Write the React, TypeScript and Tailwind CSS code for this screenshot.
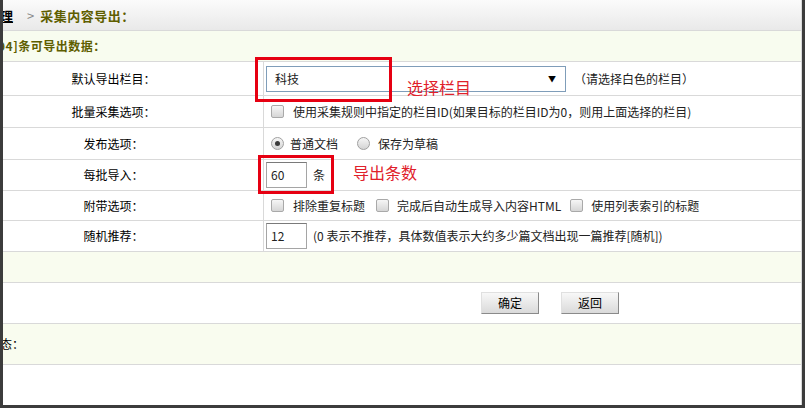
import React from 'react'

const font = { fontFamily: '"Noto Sans CJK SC", "Liberation Sans", sans-serif' }

function Checkbox() {
  return (
    <span className="inline-block w-[13px] h-[13px] rounded-[2px] border border-[#a9a9a9] bg-gradient-to-b from-[#f6f6f6] to-[#d6d6d6] shrink-0" />
  )
}

function Radio({ checked }: { checked?: boolean }) {
  return (
    <span className="inline-flex items-center justify-center w-[13px] h-[13px] rounded-full border border-[#a0a0a0] bg-gradient-to-b from-[#f6f6f6] to-[#d4d4d4] shrink-0">
      {checked && <span className="w-[5px] h-[5px] rounded-full bg-[#3a3a3a]" />}
    </span>
  )
}

function Row({ label, h, children }: { label: string; h: string; children: React.ReactNode }) {
  return (
    <div className={`flex border-b border-[#d9d9d9] ${h}`}>
      <div className="w-[300px] shrink-0 flex items-center justify-center border-r border-[#d9d9d9] text-black">
        {label}
      </div>
      <div className="flex-1 flex items-center pl-[2px] text-[#222]">{children}</div>
    </div>
  )
}

export default function App() {
  return (
    <div className="w-[805px] h-[408px] bg-[#3c3c3c] border-l-[3px] border-r-[3px] border-b-[3px] border-[#3c3c3c]" style={font}>
      <div className="relative w-full h-full bg-white overflow-hidden text-[12px] leading-none">
        <div className="ml-[-39px] w-[838px] border-r border-[#d9d9d9] h-full">
          {/* breadcrumb */}
          <div className="h-[31px] flex items-center pl-[23px] bg-gradient-to-b from-[#fbfbfb] to-[#e9e9e9] border-b border-[#d9d9d9] font-bold text-[13px]">
            <span className="text-black underline">管理</span>
            <span className="text-[#888] ml-[14px] mr-[6px] font-normal">&gt;</span>
            <span className="text-[#5e5e00] tracking-[0.5px]">采集内容导出：</span>
          </div>

          <div className="h-[31px] flex items-center pl-[29px] bg-[#f8fcef] border-b border-[#d9d9d9] font-bold text-[#5e5e00] tracking-[0.5px]">
            [94]条可导出数据：
          </div>

          <Row label="默认导出栏目：" h="h-[34px]">
            <div className="w-[300px] h-[26px] border border-[#7f9db9] flex items-center justify-between pl-[8px] pr-[9px]">
              <span>科技</span>
              <span className="text-[8px] text-black">▼</span>
            </div>
            <span className="ml-[8px]">（请选择白色的栏目）</span>
          </Row>

          <Row label="批量采集选项：" h="h-[32px]">
            <span className="ml-[5px]"><Checkbox /></span>
            <span className="ml-[9px]">使用采集规则中指定的栏目ID(如果目标的栏目ID为0，则用上面选择的栏目)</span>
          </Row>

          <Row label="发布选项：" h="h-[32px]">
            <span className="ml-[5px] flex"><Radio checked /></span>
            <span className="ml-[6px]">普通文档</span>
            <span className="ml-[19px] flex"><Radio /></span>
            <span className="ml-[8px]">保存为草稿</span>
          </Row>

          <Row label="每批导入：" h="h-[31px]">
            <div className="w-[41px] h-[26px] border border-[#a5a5a5] border-t-[#7a7a7a] flex items-center pl-[4px]">60</div>
            <span className="ml-[6px]">条</span>
          </Row>

          <Row label="附带选项：" h="h-[30px]">
            <span className="ml-[5px] flex"><Checkbox /></span>
            <span className="ml-[9px]">排除重复标题</span>
            <span className="ml-[11px] flex"><Checkbox /></span>
            <span className="ml-[8px]">完成后自动生成导入内容HTML</span>
            <span className="ml-[9px] flex"><Checkbox /></span>
            <span className="ml-[8px]">使用列表索引的标题</span>
          </Row>

          <Row label="随机推荐：" h="h-[31px]">
            <div className="w-[41px] h-[26px] border border-[#a5a5a5] border-t-[#7a7a7a] flex items-center pl-[4px]">12</div>
            <span className="ml-[6px]">(0 表示不推荐，具体数值表示大约多少篇文档出现一篇推荐[随机])</span>
          </Row>

          <div className="h-[31px] bg-[#f9fcef] border-b border-[#d9d9d9]" />

          <div className="h-[41px] border-b border-[#d9d9d9] flex items-center pl-[517px] gap-[22px]">
            <button className="w-[58px] h-[22px] bg-gradient-to-b from-[#f8f8f8] to-[#dadada] border border-[#e0e0e0] border-r-[#8a8a8a] border-b-[#8a8a8a] text-black text-[12px]">确定</button>
            <button className="w-[58px] h-[22px] bg-gradient-to-b from-[#f8f8f8] to-[#dadada] border border-[#e0e0e0] border-r-[#8a8a8a] border-b-[#8a8a8a] text-black text-[12px]">返回</button>
          </div>

          <div className="h-[41px] bg-[#f9fcef] border-b border-[#d9d9d9] flex items-center pl-[24px] text-black">
            状态：
          </div>
        </div>

        {/* annotations */}
        <div className="absolute left-[252px] top-[57px] w-[137px] h-[45px] border-[3px] border-[#e60012]" />
        <span className="absolute left-[404px] top-[79px] text-[16px] text-[#e0202a]">选择栏目</span>
        <div className="absolute left-[255px] top-[155px] w-[76px] h-[39px] border-[3px] border-[#e60012]" />
        <span className="absolute left-[350px] top-[164px] text-[16px] text-[#e0202a]">导出条数</span>
      </div>
    </div>
  )
}
